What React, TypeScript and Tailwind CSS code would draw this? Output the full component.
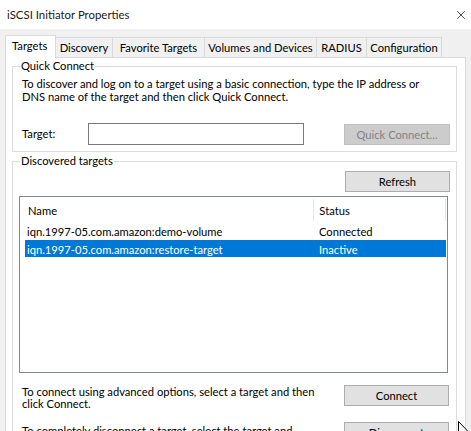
import { X } from "lucide-react";

const tabs = [
  { label: "Targets", w: "w-[51px]" },
  { label: "Discovery", w: "w-[57px]" },
  { label: "Favorite Targets", w: "w-[92px]" },
  { label: "Volumes and Devices", w: "w-[112px]" },
  { label: "RADIUS", w: "w-[50px]" },
  { label: "Configuration", w: "w-[75px]" },
];

const targets = [
  { name: "iqn.1997-05.com.amazon:demo-volume", status: "Connected", selected: false },
  { name: "iqn.1997-05.com.amazon:restore-target", status: "Inactive", selected: true },
];

const Button = ({ children, disabled = false }: { children: string; disabled?: boolean }) => (
  <button
    className={
      disabled
        ? "w-[106px] h-[21px] border border-[#bfbfbf] bg-[#cccccc] text-[#838383] leading-[19px]"
        : "w-[105px] h-[21px] border border-[#adadad] bg-[#e1e1e1] text-black leading-[19px]"
    }
  >
    {children}
  </button>
);

export default function App() {
  return (
    <div className="relative w-[471px] h-[431px] overflow-hidden bg-[#f0f0f0] text-[11.2px] text-black font-['Lato','Noto_Sans',sans-serif]">
      {/* title bar */}
      <div className="h-[29px] bg-white flex items-center justify-between pl-[7px] pr-[3px]">
        <span className="text-[11.4px] text-[#1a1a1a]">iSCSI Initiator Properties</span>
        <X className="w-[14px] h-[14px] text-black" strokeWidth={1.2} />
      </div>

      {/* tabs */}
      <div className="pt-[6px] pl-[5px] flex items-end whitespace-nowrap">
        {tabs.map((t, i) =>
          i === 0 ? (
            <div
              key={t.label}
              className={`${t.w} h-[23px] -mb-px relative z-10 bg-white border border-b-0 border-[#d9d9d9] pl-[6px] leading-[20px]`}
            >
              {t.label}
            </div>
          ) : (
            <div
              key={t.label}
              className={`${t.w} h-[20px] bg-[#f0f0f0] border border-l-0 border-b-0 border-[#d9d9d9] text-center leading-[20px]`}
            >
              {t.label}
            </div>
          )
        )}
      </div>

      {/* panel */}
      <div className="ml-[5px] w-[461px] h-[400px] bg-white border border-[#d9d9d9] pl-[6px] pt-0">
        <fieldset className="w-[445px] border border-[#dcdcdc] pl-[9px] pr-[6px] pb-[6px]">
          <legend className="ml-[-2px] px-[1px] leading-[16px]">Quick Connect</legend>
          <p className="mt-[3px] leading-[13px]">
            To discover and log on to a target using a basic connection, type the IP address or
            <br />
            DNS name of the target and then click Quick Connect.
          </p>
          <div className="mt-[20px] flex items-center">
            <span className="w-[66px]">Target:</span>
            <div className="w-[216px] h-[22px] border border-[#7a7a7a] bg-white" />
            <div className="ml-auto">
              <Button disabled>Quick Connect...</Button>
            </div>
          </div>
        </fieldset>

        <fieldset className="mt-px w-[445px] h-[300px] border border-[#dcdcdc] pl-[6px] pr-[6px]">
          <legend className="ml-[1px] px-[1px] leading-[16px]">Discovered targets</legend>
          <div className="mt-[2px] flex justify-end">
            <Button>Refresh</Button>
          </div>
          <div className="mt-[4px] w-[429px] h-[177px] border border-[#828790] bg-white pl-[5px] pr-px">
            <div className="h-[25px] flex items-center">
              <span className="w-[289px] pl-[3px] pt-[3px]">Name</span>
              <span className="h-[22px] w-px bg-[#e5e5e5]" />
              <span className="w-[131px] pl-[5px] pt-[3px]">Status</span>
              <span className="h-[22px] w-px bg-[#e5e5e5]" />
            </div>
            {targets.map((r) => (
              <div
                key={r.name}
                className={`h-[17px] flex items-center leading-[17px] ${
                  r.selected ? "bg-[#0078d7] text-white mt-px" : ""
                }`}
              >
                <span className="w-[290px] pl-[2px] pt-px">{r.name}</span>
                <span className="pl-[4px] pt-px">{r.status}</span>
              </div>
            ))}
          </div>

          <div className="mt-[12px] flex items-start pl-[3px]">
            <p className="leading-[12px] pt-[1px]">
              To connect using advanced options, select a target and then
              <br />
              click Connect.
            </p>
            <div className="ml-auto mr-[1px]">
              <Button>Connect</Button>
            </div>
          </div>
          <div className="mt-[14px] flex items-start pl-[3px]">
            <p className="leading-[12px] pt-[1px]">
              To completely disconnect a target, select the target and
              <br />
              then click Disconnect.
            </p>
            <div className="ml-auto mr-[1px] -mt-[2px]">
              <Button>Disconnect</Button>
            </div>
          </div>
        </fieldset>
      </div>

      {/* mouse pointer */}
      <svg className="absolute left-[458px] top-[421px]" width="13" height="19" viewBox="0 0 13 19">
        <path d="M0.5 0.5 L0.5 16 L4 12.5 L6.5 18 L8.5 17 L6 11.5 L11 11.5 Z" fill="white" stroke="black" strokeWidth="1" />
      </svg>
    </div>
  );
}
